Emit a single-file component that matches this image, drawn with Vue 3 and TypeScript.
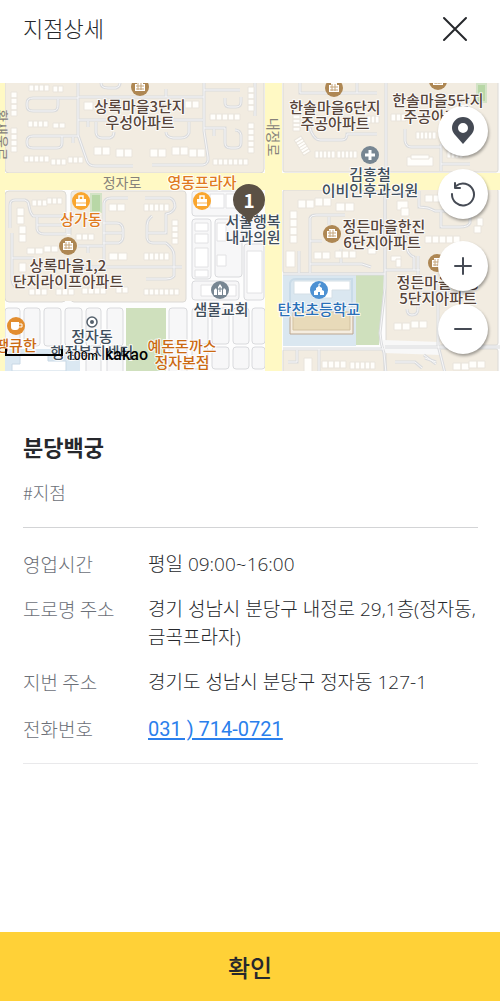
<script setup lang="ts">
interface Row {
  x: number
  y: number
  n: number
  w: number
  h: number
  col?: boolean
  turn?: number
}
interface Label {
  x: number
  y: number
  lines: string[]
  kind: string
}
interface Spot {
  x: number
  y: number
}

const row = (x: number, y: number, n: number, w: number, h: number): Row => ({ x, y, n, w, h })
const col = (x: number, y: number, n: number, w: number, h: number): Row => ({ x, y, n, w, h, col: true })

const buildings: Row[] = [
  col(11, 9, 4, 6, 6), col(11, 45, 4, 6, 6),
  row(29, 2, 4, 5, 6), row(53, 3, 2, 5, 6), row(28, 38, 4, 5, 6), row(53, 40, 2, 6, 5),
  row(24, 73, 5, 5, 6), row(51, 76, 3, 5, 6), row(68, 74, 3, 5, 6),
  row(94, 64, 2, 8, 8), row(116, 66, 2, 8, 8), row(150, 66, 2, 8, 8), row(84, 19, 1, 9, 8),
  row(172, 64, 2, 8, 8), row(189, 66, 2, 8, 8), row(213, 76, 7, 5, 6),
  col(248, 40, 5, 6, 6), row(210, 31, 5, 6, 6), col(248, 4, 4, 6, 6), row(185, 18, 2, 7, 7),
  col(293, 32, 4, 7, 4), { x: 301, y: 53, n: 6, w: 3, h: 8, turn: 58 },
  row(315, 68, 5, 4, 7), row(337, 68, 5, 4, 7),
  row(391, 31, 3, 5, 7), row(416, 49, 5, 4, 7), row(407, 74, 1, 26, 9), row(411, 72, 1, 18, 4),
  row(367, 33, 3, 4, 7), row(447, 68, 4, 4, 7),
  row(32, 117, 3, 5, 6), row(47, 115, 3, 5, 6), col(17, 125, 2, 7, 8), col(19, 143, 2, 7, 8),
  row(109, 121, 2, 8, 7), row(144, 121, 5, 5, 7),
  row(27, 165, 2, 8, 6), row(44, 163, 2, 7, 6), row(76, 151, 3, 6, 6), row(109, 170, 2, 9, 7),
  row(29, 206, 3, 6, 6), row(56, 206, 3, 6, 6), row(82, 205, 4, 6, 6), row(116, 204, 2, 6, 6),
  row(144, 206, 7, 5, 6), col(19, 180, 1, 7, 9), row(144, 170, 5, 5, 7), col(172, 137, 4, 6, 6),
  row(298, 117, 2, 8, 8), row(315, 115, 2, 8, 8), row(336, 120, 2, 9, 8), col(290, 128, 4, 7, 8), row(286, 168, 1, 9, 16),
  row(314, 169, 2, 8, 7), row(335, 168, 3, 7, 7), row(368, 165, 1, 8, 6),
  row(425, 112, 2, 8, 7), row(397, 118, 1, 11, 9), row(401, 125, 1, 8, 8),
  row(425, 153, 5, 7, 7), row(391, 173, 1, 10, 5), row(396, 176, 1, 5, 8),
  row(477, 135, 1, 6, 8), row(474, 143, 1, 7, 7),
  row(394, 240, 2, 8, 7), row(411, 238, 2, 8, 7), row(322, 278, 4, 6, 7), row(350, 279, 5, 5, 7),
  row(453, 280, 2, 8, 7), row(469, 278, 2, 8, 7), row(304, 275, 1, 8, 14),
]

const lanes: string[] = [
  'M78 0V52L87 78Q89 83 95 83H133',
  'M78 15H33Q27 15 27 20V23Q27 28 33 28H53Q58 28 58 22V16',
  'M78 53H33Q27 53 27 58V60Q27 65 33 65H57Q62 65 62 60V53',
  'M78 14H204M73 54V60M78 37H203M96 39V50Q97 55 102 55H110Q114 54 114 49M88 38V44',
  'M152 82H203Q209 81 208 74L204 48V0M166 14V6M204 7H240M101 0Q101 5 108 5H116Q120 4 120 0',
  'M255 0V33M204 45H225V60Q225 65 231 65H236Q241 65 241 60V52Q240 47 235 47M214 46V53',
  'M225 15V20Q225 24 230 24H236Q241 24 241 19V14M189 39V50Q187 55 181 55H173Q166 54 166 49',
  'M386 0V88M309 42Q313 57 320 57H342Q347 57 347 51H377M377 10H300V0M357 0V10',
  'M405 46V58Q406 64 411 64H441M441 61V88M441 81H470',
  'M10 145V122Q10 117 15 117H25Q29 118 29 123Q30 130 33 133H67',
  'M37 134V146Q38 151 44 151H66M37 142H67M69 134V151M78 163H103M12 150V197Q13 204 18 205',
  'M104 180V120Q105 115 111 115H128M103 160H119Q123 158 123 154V146Q122 140 117 140H103M103 150H122',
  'M145 115H170Q175 117 175 124Q173 130 166 131V150H148M152 133Q147 137 147 142V155Q148 160 153 160H166Q174 166 174 172V193Q172 196 166 196H146',
  'M12 175H34M80 184H182M88 163V170',
  'M310 190V135Q311 132 316 132H345M329 134V142M310 158H322M299 168V190M310 181H362L371 184M341 166V180',
  'M283 191H385M385 108V205L380 250Q381 262 384 270L386 290M385 187H420M418 187V226Q418 232 412 232Q407 232 407 226',
  'M438 200V262L445 290M418 210H470M385 264H500M395 279H415L422 285M419 108V124Q429 124 435 128H470V140Q468 144 460 144H441V129',
  'M283 266H384M319 266V290M297 267V279H288M424 272L436 281M425 275L436 279M407 165Q408 172 414 174V187M404 150L418 162M418 173V187',
]

const cells: [number, number, number, number][] = [
  [192, 108, 54, 25], [192, 136, 19, 60], [215, 136, 27, 58], [192, 198, 47, 19], [244, 161, 20, 56], [246, 136, 18, 22],
  [5, 225, 15, 38], [24, 225, 16, 38], [44, 225, 17, 38], [65, 225, 17, 38], [86, 225, 15, 38], [107, 225, 16, 38],
  [169, 225, 18, 36], [192, 225, 16, 36], [212, 225, 17, 36], [233, 225, 16, 36], [252, 225, 13, 36],
  [169, 264, 18, 30], [192, 264, 16, 22], [212, 264, 17, 22], [233, 264, 16, 22], [252, 264, 13, 22],
  [86, 266, 15, 30], [107, 266, 16, 30],
]

const labels: Label[] = [
  { x: 140, y: 29, lines: ['상록마을3단지', '우성아파트'], kind: 'home' },
  { x: 335, y: 30, lines: ['한솔마을6단지', '주공아파트'], kind: 'home' },
  { x: 438, y: 23, lines: ['한솔마을5단지', '주공아파트'], kind: 'home' },
  { x: 370, y: 97, lines: ['김홍철', '이비인후과의원'], kind: 'office' },
  { x: 202, y: 105, lines: ['영동프라자'], kind: 'shop' },
  { x: 81, y: 142, lines: ['상가동'], kind: 'shop' },
  { x: 253, y: 144, lines: ['서울행복', '내과의원'], kind: 'office' },
  { x: 384, y: 149, lines: ['정든마을한진'], kind: 'home' },
  { x: 382, y: 165, lines: ['6단지아파트'], kind: 'home' },
  { x: 68, y: 188, lines: ['상록마을1,2', '단지라이프아파트'], kind: 'home' },
  { x: 221, y: 232, lines: ['샘물교회'], kind: 'office' },
  { x: 319, y: 232, lines: ['탄천초등학교'], kind: 'school' },
  { x: 438, y: 205, lines: ['정든마을우성', '5단지아파트'], kind: 'home' },
  { x: 16, y: 268, lines: ['땡큐한'], kind: 'food' },
  { x: 92, y: 259, lines: ['정자동', '행정복지센터'], kind: 'office' },
  { x: 182, y: 269, lines: ['예돈돈까스', '정자본점'], kind: 'food' },
]

const homes: Spot[] = [
  { x: 140, y: 4 }, { x: 334, y: 5 }, { x: 438, y: -2 }, { x: 68, y: 163 }, { x: 332, y: 151 }, { x: 437, y: 180 },
]
const shops: Spot[] = [{ x: 81, y: 118 }, { x: 202, y: 118 }]

const rows = [
  { label: '영업시간', value: '평일 09:00~16:00' },
  { label: '도로명 주소', value: '경기 성남시 분당구 내정로 29,1층(정자동, 금곡프라자)' },
  { label: '지번 주소', value: '경기도 성남시 분당구 정자동 127-1' },
]
const phone = '031 ) 714-0721'

function outline(b: Row): string {
  let d = ''
  for (let i = 0; i < b.n; i++) {
    const x = b.x + (b.col ? 0 : i * b.w)
    const y = b.y + (b.col ? i * b.h : 0)
    d += `M${x} ${y}h${b.w}v${b.h}h${-b.w}z`
  }
  return d
}
</script>

<template>
  <main class="page">
    <header class="header">
      <h1 class="title">지점상세</h1>
      <button class="close" type="button" aria-label="닫기">
        <svg width="26" height="26" viewBox="0 0 26 26" aria-hidden="true">
          <path d="M2 2L24 24M24 2L2 24" />
        </svg>
      </button>
    </header>

    <section class="map" aria-label="지도">
      <svg class="canvas" viewBox="0 0 500 288" preserveAspectRatio="xMidYMid slice">
        <rect width="500" height="288" fill="#fdfdfd" />
        <g class="block">
          <rect x="5" y="-6" width="259" height="96" rx="4" />
          <rect x="283" y="-6" width="215" height="95" rx="2" />
          <rect x="5" y="108" width="61" height="111" rx="4" />
          <rect x="71" y="108" width="115" height="111" rx="3" />
          <path d="M60 152H80V218H60z" stroke="none" />
          <rect x="283" y="107" width="101" height="83" rx="2" />
          <rect x="386" y="106" width="112" height="156" rx="2" />
          <rect x="283" y="266" width="101" height="30" rx="2" />
          <rect x="386" y="266" width="112" height="30" rx="2" />
        </g>
        <path d="M383 257L440 259L441 272L384 270z" fill="#f8f8f8" />
        <g class="cell">
          <rect v-for="(c, i) in cells" :key="i" :x="c[0]" :y="c[1]" :width="c[2]" :height="c[3]" rx="3" />
        </g>
        <path d="M5 266H80V288H5z" fill="#dbe8f2" />
        <path d="M20 271H48V278H66V288H12V281H20z" fill="#fff" stroke="#c8d8e5" />
        <path d="M126 225H166V288H126z" fill="#cfe0bd" />
        <path d="M283 192H356V263H283z" fill="#dae7f0" />
        <path d="M290 223V200Q291 196 296 196H352V224" fill="none" stroke="#c9dbe8" stroke-width="2" />
        <path d="M294 198H350V207H332V215H312V211H294z" fill="#fff" stroke="#d4dfe6" />
        <path d="M290 233V251H353V233" fill="#f5ede0" stroke="#bba690" />
        <path d="M293 229H350V247H293z" fill="#e8dab9" stroke="#d3c2a1" />
        <path d="M356 192H384L382 230L379 262H356z" fill="#cfe0bd" />
        <path d="M91 111H101V129H91z" fill="#b8d7a6" stroke="#d3e3c6" stroke-width="2" />
        <path d="M477 1H486V19H477z" fill="#b8d7a6" stroke="#d3e3c6" stroke-width="2" />
        <path d="M0 0H5V288H0zM0 90H500V107H0zM265 0H282V288H265z" fill="#fff9c4" />

        <g fill="none" stroke="#dadbdd" stroke-width="3">
          <path v-for="(d, i) in lanes" :key="i" :d="d" />
        </g>
        <g fill="none" stroke="#f8f8f9" stroke-width="1">
          <path v-for="(d, i) in lanes" :key="i" :d="d" />
        </g>
        <g fill="#fffefb" stroke="#e9e4dc">
          <path
            v-for="(b, i) in buildings"
            :key="i"
            :d="outline(b)"
            :transform="b.turn ? `rotate(${b.turn} ${b.x} ${b.y})` : undefined"
          />
        </g>
        <g class="building-wide">
          <path d="M210 111H224V125H210zM226 111H241V125H226zM195 140H208V148H195zM195 151H208V160H195zM195 165H208V184H195zM195 187H208V194H195zM217 140H226V158H217zM217 172H226V183H217zM247 168H262V210H247zM201 202H236V213H201z" />
        </g>

        <g class="street">
          <text x="122" y="105">정자로</text>
          <text x="0" y="0" transform="translate(268 54) rotate(90)">내정로</text>
          <text x="0" y="0" transform="translate(-4 52) rotate(90)">황새울로</text>
        </g>

        <g v-for="(s, i) in homes" :key="`h${i}`" :transform="`translate(${s.x} ${s.y})`">
          <circle r="9" fill="#ae8753" />
          <path d="M-5 4V-3H-3V-5H3V-3H5V4z" fill="#fff" />
          <path d="M-2 -4V3M1 -4V3M-4 -1H4M-4 2H4" stroke="#c5a57b" />
        </g>
        <g v-for="(s, i) in shops" :key="`s${i}`" :transform="`translate(${s.x} ${s.y})`">
          <circle r="9" fill="#f9a62f" />
          <path d="M-5 -2H5V5H-5z" fill="#fff" />
          <path d="M-2 -2V-5H2V-2" fill="none" stroke="#fff" stroke-width="1.5" />
          <path d="M-5 2H5" stroke="#f9b75b" />
        </g>
        <g transform="translate(370 72)">
          <circle r="9" fill="#778692" />
          <path d="M0 -5V5M-5 0H5" stroke="#fff" stroke-width="3" />
        </g>
        <g transform="translate(220 207)">
          <circle r="9" fill="#778692" />
          <path d="M-2 5V-3L0 -6L2 -3V5zM-6 5V0L-4 -2L-3 0V5zM3 5V0L4 -2L6 0V5z" fill="#fff" />
          <path d="M0 -3V2M-2 -1H2" stroke="#778692" />
        </g>
        <g transform="translate(319 207)">
          <circle r="9" fill="#4d91d3" />
          <path d="M-5 5V1L-3 0V-2L0 -4L3 -2V0L5 1V5H1V2H-1V5z" fill="#fff" />
          <path d="M0 -3V-6H2" fill="none" stroke="#fff" />
        </g>
        <g transform="translate(16 243)">
          <circle r="9" fill="#e28d2f" />
          <path d="M-5 -4H3V1Q3 4 0 4H-2Q-5 4 -5 1z" fill="#fff" />
          <path d="M3 -2H6V1H3" fill="none" stroke="#fff" />
        </g>
        <g transform="translate(92 239)">
          <circle r="5" fill="#fff" stroke="#55616d" stroke-width="1.5" />
          <circle r="2" fill="#55616d" />
        </g>

        <g v-for="(l, i) in labels" :key="`l${i}`" class="place" :class="l.kind">
          <text v-for="(t, k) in l.lines" :key="k" :x="l.x" :y="l.y + k * 16">{{ t }}</text>
        </g>

        <path d="M249 141L244 133Q233 127 233 117A16 16 0 0 1 265 117Q265 127 254 133z" fill="#5b5145" />
        <text class="number" x="249" y="125">1</text>

        <path d="M6 266V272H62V266" fill="none" stroke="#000" stroke-width="2" />
        <text class="scale" x="67" y="277">100m</text>
        <text class="brand" x="105" y="277">kakao</text>
      </svg>

      <div class="controls">
        <div class="pair">
          <button class="round" type="button" aria-label="지점 위치">
            <svg width="24" height="28" viewBox="0 0 24 28" aria-hidden="true">
              <path
                d="M12 27L5 19Q1 15 1 11A11 11 0 0 1 23 11Q23 15 19 19zM12 6A5 5 0 1 0 12 16A5 5 0 1 0 12 6z"
                fill="#454a54"
                fill-rule="evenodd"
              />
            </svg>
          </button>
          <button class="round" type="button" aria-label="새로고침">
            <svg class="line" width="26" height="26" viewBox="0 0 26 26" aria-hidden="true">
              <path d="M2 13A11 11 0 1 0 6 5M5 2V7H10" />
            </svg>
          </button>
        </div>
        <div class="pair">
          <button class="round" type="button" aria-label="확대">
            <svg class="line" width="18" height="18" viewBox="0 0 18 18" aria-hidden="true">
              <path d="M9 1V17M1 9H17" />
            </svg>
          </button>
          <button class="round" type="button" aria-label="축소">
            <svg class="line" width="18" height="18" viewBox="0 0 18 18" aria-hidden="true">
              <path d="M1 9H17" />
            </svg>
          </button>
        </div>
      </div>
    </section>

    <section class="detail">
      <h2 class="name">분당백궁</h2>
      <p class="tag">#지점</p>
      <dl class="info">
        <div v-for="r in rows" :key="r.label" class="item">
          <dt>{{ r.label }}</dt>
          <dd>{{ r.value }}</dd>
        </div>
        <div class="item phone">
          <dt>전화번호</dt>
          <dd><a href="tel:0317140721">{{ phone }}</a></dd>
        </div>
      </dl>
    </section>

    <button class="confirm" type="button">확인</button>
  </main>
</template>

<style>
body {
  margin: 0;
  background: #fff;
}
</style>

<style scoped>
.page {
  display: flex;
  flex-direction: column;
  min-height: 100vh;
  color: #26282c;
  font-family: "Noto Sans CJK KR", "Noto Sans", sans-serif;
}
button {
  padding: 0;
  border: 0;
  cursor: pointer;
  font-family: inherit;
}
.header {
  display: flex;
  align-items: center;
  justify-content: space-between;
  padding: 9px 25px 34px 23px;
}
.title {
  margin: 0;
  font-size: 22px;
  font-weight: 300;
  line-height: 36px;
  padding-bottom: 4px;
}
.close {
  display: grid;
  place-items: center;
  width: 40px;
  height: 40px;
  background: none;
}
.close path {
  fill: none;
  stroke: #26282c;
  stroke-width: 2;
  stroke-linecap: round;
}
.map {
  position: relative;
  overflow: hidden;
}
.canvas {
  display: block;
  width: 100%;
  height: 288px;
}
.block {
  fill: #f2ece1;
  stroke: #dcdad6;
}
.cell {
  fill: #f7f7f8;
  stroke: #d9dadd;
}
.building-wide {
  fill: #fff;
  stroke: #e2e2e4;
}
.street {
  fill: #85817b;
  font-size: 14px;
  text-anchor: middle;
}
.place {
  font-size: 15px;
  font-weight: 500;
  text-anchor: middle;
  stroke: rgba(255, 255, 255, 0.85);
  stroke-width: 2px;
  stroke-linejoin: round;
  paint-order: stroke;
}
.home {
  fill: #57443a;
}
.office {
  fill: #404e5c;
}
.shop {
  fill: #e07a20;
}
.food {
  fill: #cb6a12;
}
.school {
  fill: #2a70b8;
}
.number {
  fill: #fff;
  font-size: 19px;
  font-weight: 700;
  text-anchor: middle;
}
.scale {
  font-family: Roboto, sans-serif;
  font-size: 12px;
  font-weight: 500;
  stroke: #fff;
  stroke-width: 1px;
  paint-order: stroke;
}
.brand {
  font-family: Roboto, sans-serif;
  font-size: 16px;
  font-weight: 500;
}
.controls {
  position: absolute;
  top: 23px;
  right: 12px;
  display: grid;
  gap: 22px;
}
.pair {
  display: grid;
  gap: 13px;
}
.round {
  display: grid;
  place-items: center;
  width: 50px;
  height: 50px;
  border-radius: 50%;
  background: #fff;
  box-shadow: 1px 2px 3px rgba(0, 0, 0, 0.35);
}
.line {
  fill: none;
  stroke: #454a54;
  stroke-width: 2;
  stroke-linecap: round;
  stroke-linejoin: round;
}
.detail {
  padding: 60px 22px 40px 23px;
}
.name {
  margin: 0;
  font-size: 22px;
  font-weight: 700;
  line-height: 30px;
}
.tag {
  margin: 17px 0 0;
  color: #6c7078;
  font-size: 18px;
  font-weight: 300;
  line-height: 28px;
}
.info {
  display: grid;
  gap: 17px;
  margin: 21px 0 0;
  padding: 22px 0 18px;
  border-top: 1px solid #d3d4d6;
  border-bottom: 1px solid #e9e9eb;
}
.item {
  display: grid;
  grid-template-columns: 125px 1fr;
  font-size: 19px;
  font-weight: 300;
  line-height: 28px;
}
.item dt {
  color: #6c7078;
}
.item dd {
  margin: 0;
  font-family: "Open Sans", "Noto Sans CJK KR", sans-serif;
}
.phone {
  line-height: 32px;
}
.phone a {
  color: #2b7fec;
  font-family: Roboto, sans-serif;
  font-size: 20px;
  font-weight: 400;
  text-underline-offset: 2px;
}
.confirm {
  height: 69px;
  margin-top: auto;
  background: #ffd137;
  color: #26282c;
  font-size: 24px;
  font-weight: 500;
}
</style>
